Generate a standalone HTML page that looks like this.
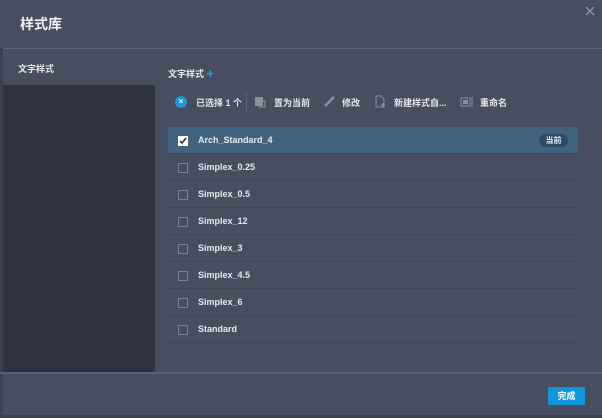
<!DOCTYPE html>
<html><head><meta charset="utf-8"><style>
*{margin:0;padding:0;box-sizing:border-box}
body{width:602px;height:418px;background:#474e5f;font-family:"Liberation Sans","Noto Sans CJK SC",sans-serif;color:#e8eaee;position:relative;overflow:hidden;font-size:9px;font-weight:bold}
.abs{position:absolute}
.title{left:20px;top:14px;font-size:14px;font-weight:bold;color:#f0f1f4}
.hline{left:0;width:602px;height:1px;background:#5c6577}
.left{left:3px;top:85px;width:152px;height:287px;background:#2e333f}
.row{left:168px;width:410px;height:27px;border-bottom:1px solid #3f4555}
.row .cb{position:absolute;left:10px;top:9px;width:10px;height:10px;border:1px solid #7b8291}
.row .t{position:absolute;left:30px;top:8px;font-size:9px;color:#e8eaee}
.sel{background:#42637e}
.sel .cb{background:#fff;border-color:#fff}
.tb{top:96px;font-size:9px;color:#e6e8ec}
</style></head><body>
<div class="abs title">样式库</div>
<svg class="abs" style="left:585px;top:6px" width="10" height="10"><path d="M1 1L9 9M9 1L1 9" stroke="#9aa1ae" stroke-width="1.2"/></svg>
<div class="abs hline" style="top:48px"></div>
<div class="abs" style="left:0;top:48px;width:3px;height:370px;background:#3b4150"></div>
<div class="abs" style="left:18px;top:62px">文字样式</div>
<div class="abs left"></div>
<div class="abs" style="left:168px;top:65px">文字样式 <span style="color:#2a9be0;font-size:13px;position:relative;top:1px">+</span></div>
<div class="abs" style="left:175px;top:96px;width:12px;height:12px;border-radius:50%;background:#1e96dc;color:#fff;font-size:8px;text-align:center;line-height:12px">×</div>
<div class="abs tb" style="left:196px">已选择 1 个</div>
<div class="abs" style="left:246px;top:92px;width:1px;height:20px;background:#5c6577"></div>
<svg class="abs" style="left:254px;top:96px" width="12" height="12"><rect x="1" y="1" width="8" height="9" fill="#8b919d"/><rect x="5" y="5" width="6" height="6" fill="none" stroke="#8b919d"/></svg>
<div class="abs tb" style="left:274px">置为当前</div>
<svg class="abs" style="left:323px;top:95px" width="13" height="13"><path d="M2 11L11 2" stroke="#8b919d" stroke-width="2.5"/></svg>
<div class="abs tb" style="left:342px">修改</div>
<svg class="abs" style="left:374px;top:95px" width="13" height="13"><path d="M2 1H7L10 4V12H2Z" fill="none" stroke="#8b919d"/><path d="M9 8V12M7 10H11" stroke="#8b919d"/></svg>
<div class="abs tb" style="left:394px">新建样式自...</div>
<svg class="abs" style="left:460px;top:96px" width="13" height="12"><rect x="1" y="2" width="9" height="8" fill="none" stroke="#8b919d"/><rect x="3" y="4" width="5" height="4" fill="#8b919d"/><path d="M12 1V11" stroke="#8b919d"/></svg>
<div class="abs tb" style="left:480px">重命名</div>
<div class="abs row sel" style="top:127px"><div class="cb"><svg width="8" height="8" style="position:absolute;left:0;top:0"><path d="M1 4L3 6L7 1" stroke="#2e333f" stroke-width="1.6" fill="none"/></svg></div><div class="t">Arch_Standard_4</div><div style="position:absolute;right:10px;top:7px;width:29px;height:13px;border-radius:7px;background:#2f4a60;font-size:8px;text-align:center;line-height:13px">当前</div></div>
<div class="abs row" style="top:154px"><div class="cb"></div><div class="t">Simplex_0.25</div></div>
<div class="abs row" style="top:181px"><div class="cb"></div><div class="t">Simplex_0.5</div></div>
<div class="abs row" style="top:208px"><div class="cb"></div><div class="t">Simplex_12</div></div>
<div class="abs row" style="top:235px"><div class="cb"></div><div class="t">Simplex_3</div></div>
<div class="abs row" style="top:262px"><div class="cb"></div><div class="t">Simplex_4.5</div></div>
<div class="abs row" style="top:289px"><div class="cb"></div><div class="t">Simplex_6</div></div>
<div class="abs row" style="top:316px"><div class="cb"></div><div class="t">Standard</div></div>
<div class="abs hline" style="top:372px;height:2px;background:#565e6f"></div>
<div class="abs" style="left:548px;top:387px;width:37px;height:18px;background:#1196dc;color:#fff;font-size:9px;text-align:center;line-height:18px">完成</div>
<div class="abs" style="left:0;top:415px;width:602px;height:3px;background:#3b4150"></div>
</body></html>
